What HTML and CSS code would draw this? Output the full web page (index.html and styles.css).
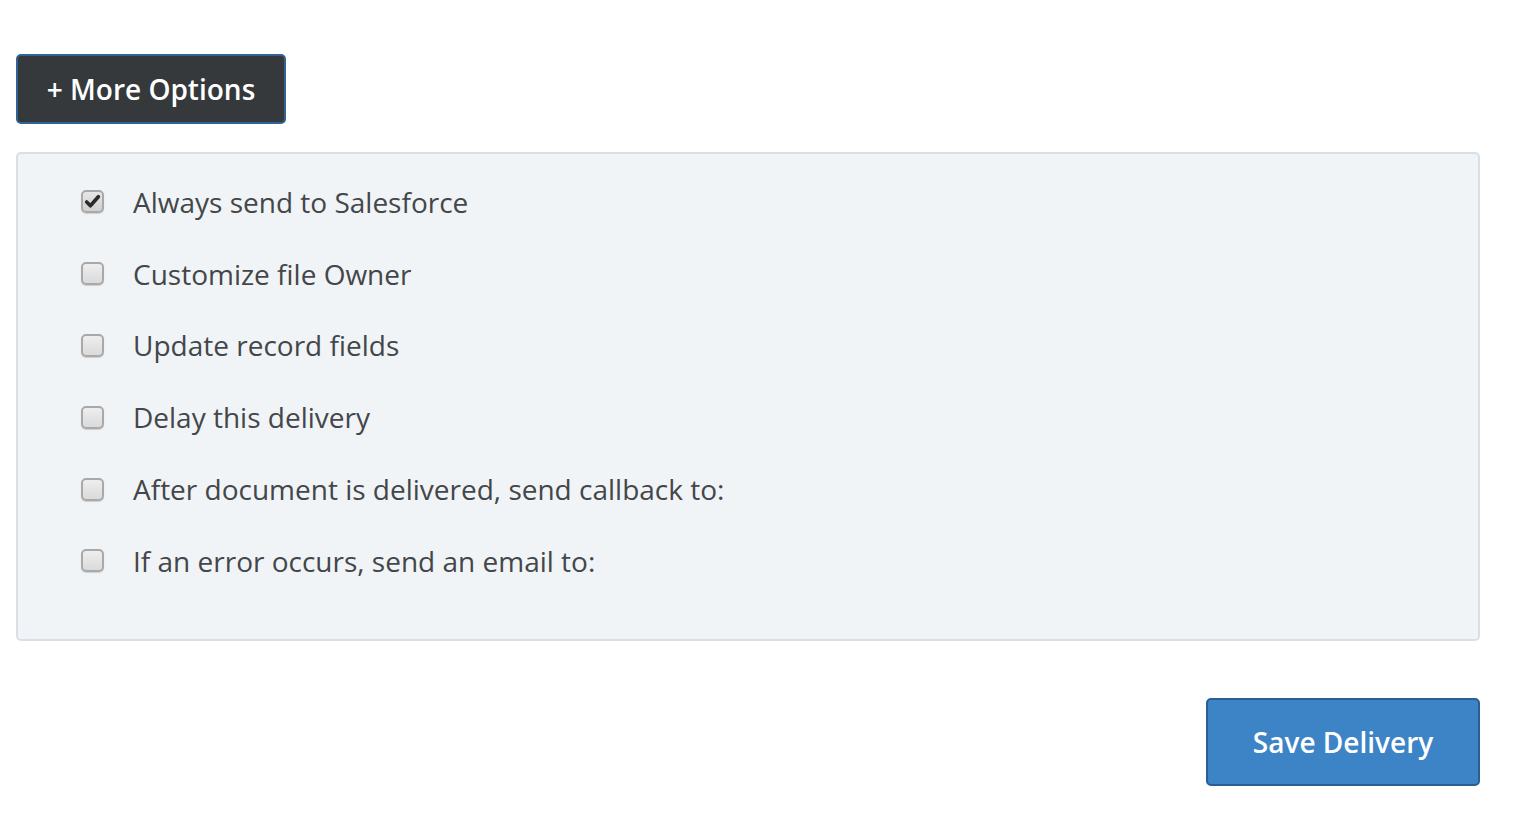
FILE: index.html
```html
<!DOCTYPE html>
<html>
<head>
<meta charset="utf-8">
<link rel="stylesheet" href="styles.css">
</head>
<body>
<div class="page">
  <button class="btn btn-dark">+ More Options</button>
  <div class="panel">
    <label class="row"><span class="cb checked"><svg viewBox="0 0 16 16" width="17" height="17"><path d="M2.5 8.5 L6 12 L13.5 3.5" fill="none" stroke="#2b2b2b" stroke-width="3.4" stroke-linecap="round" stroke-linejoin="round"/></svg></span><span class="txt">Always send to Salesforce</span></label>
    <label class="row"><span class="cb"></span><span class="txt">Customize file Owner</span></label>
    <label class="row"><span class="cb"></span><span class="txt">Update record fields</span></label>
    <label class="row"><span class="cb"></span><span class="txt">Delay this delivery</span></label>
    <label class="row"><span class="cb"></span><span class="txt">After document is delivered, send callback to:</span></label>
    <label class="row"><span class="cb"></span><span class="txt">If an error occurs, send an email to:</span></label>
  </div>
  <div class="actions">
    <button class="btn btn-primary">Save Delivery</button>
  </div>
</div>
</body>
</html>
```
FILE: styles.css
```css
html, body {
  margin: 0;
  padding: 0;
  background: #fff;
  font-family: "Open Sans", "Liberation Sans", sans-serif;
}
.page {
  width: 1464px;
  padding: 54px 0 0 16px;
}
.btn {
  font-family: "Open Sans", "Liberation Sans", sans-serif;
  font-weight: 600;
  font-size: 28px;
  color: #fff;
  border-radius: 5px;
  cursor: pointer;
  display: block;
}
.btn-dark {
  width: 270px;
  height: 70px;
  background: #35393c;
  border: 2px solid #2f6295;
  padding: 0;
}
.panel {
  margin-top: 28px;
  height: 489px;
  box-sizing: border-box;
  background: #f0f4f7;
  border: 2px solid #d8e0e7;
  border-radius: 5px;
  padding: 12px 0 0 63px;
}
.row {
  display: flex;
  align-items: center;
  height: 71.8px;
}
.cb {
  width: 23px;
  height: 23px;
  box-sizing: border-box;
  border: 2px solid #a9a9a9;
  border-radius: 5px;
  background: linear-gradient(#eeeeee, #dadada);
  box-shadow: 0 1px 1px rgba(0,0,0,0.15);
  display: flex;
  align-items: center;
  justify-content: center;
  flex: none;
}
.cb.checked {
  background: linear-gradient(#e6e6e6, #d0d0d0);
}
.txt {
  margin-left: 29px;
  font-size: 28px;
  color: #444649;
}
.actions {
  display: flex;
  justify-content: flex-end;
  margin-top: 57px;
}
.btn-primary {
  width: 274px;
  height: 88px;
  background: #3d84c6;
  border: 2px solid #2c5f91;
  padding: 0;
}
```
